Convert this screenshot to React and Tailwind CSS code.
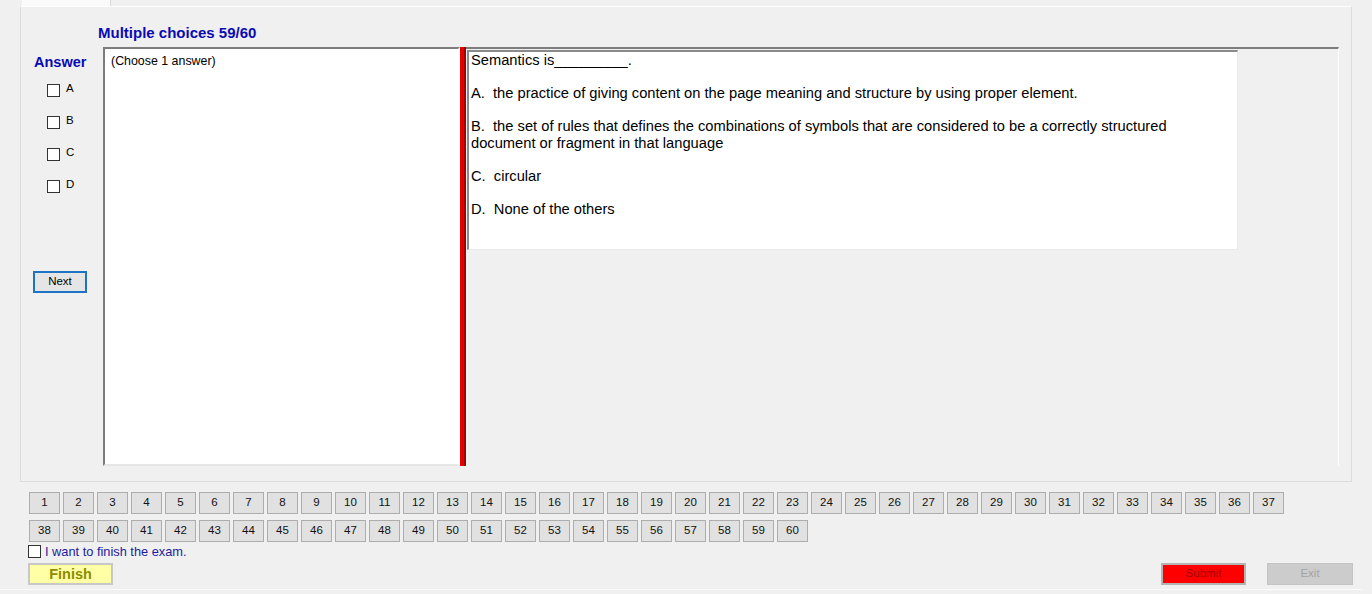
import React from 'react';

// Exam client window: question pane + answer column + question navigator.
const FONT = { fontFamily: '"Liberation Sans", Arial, sans-serif' };

const options = ['A', 'B', 'C', 'D'];
const row1 = Array.from({ length: 37 }, (_, i) => i + 1);
const row2 = Array.from({ length: 23 }, (_, i) => i + 38);

function Box({ className = '' }) {
  return <span className={`inline-block shrink-0 w-[13px] h-[13px] border border-[#333] bg-white ${className}`} />;
}

function NumButton({ n }) {
  return (
    <button className="w-[31px] h-[22px] border border-[#adadad] bg-[#e1e1e1] text-[11.5px] text-[#111] leading-none">
      {n}
    </button>
  );
}

export default function App() {
  return (
    <div style={FONT} className="w-[1372px] h-[594px] bg-[#f0f0f0] overflow-hidden flex flex-col text-black">
      {/* tab strip */}
      <div className="h-[6px] flex">
        <div className="ml-[22px] w-[89px] h-[6px] bg-[#fafafa] border-r border-[#d9d9d9]" />
      </div>

      {/* tab page */}
      <div className="ml-[20px] w-[1332px] h-[476px] border border-[#dcdcdc] border-t-[#fdfdfd] flex flex-col">
        <div className="h-[40px] pt-[17px] pl-[77px] text-[15px] font-bold text-[#0a0ab4] leading-[17px]">
          Multiple choices 59/60
        </div>

        <div className="flex h-[419px]">
          {/* answer column */}
          <div className="w-[82px] flex flex-col">
            <div className="mt-[7px] ml-[13px] text-[14.5px] font-bold text-[#0a0ab4] leading-[17px]">Answer</div>
            <div className="mt-[13px] ml-[26px] flex flex-col gap-[19px]">
              {options.map((o) => (
                <label key={o} className="flex items-center gap-[6px] h-[13px] text-[11.5px] leading-none">
                  <Box />
                  <span className="-mt-[4px]">{o}</span>
                </label>
              ))}
            </div>
            <button className="mt-[78px] ml-[12px] w-[54px] h-[22px] border-2 border-[#1f73c4] bg-[#e5e5e5] text-[11.5px] leading-none">
              Next
            </button>
          </div>

          {/* answer notes box */}
          <div className="w-[357px] bg-white border-2 border-t-[#7c7c7c] border-l-[#7c7c7c] border-r-white border-b-[#e6e6e6] pl-[6px] pt-[5px] text-[12.4px] leading-[14px]">
            (Choose 1 answer)
          </div>

          {/* splitter */}
          <div className="w-[6px] bg-[#e30000] border-r-2 border-[#a10000]" />

          {/* question panel */}
          <div className="w-[873px] border-t-2 border-[#7c7c7c] border-r border-r-[#fcfcfc] pt-[1px] pl-[1px]">
            <div className="w-[771px] h-[200px] bg-white border-l-2 border-t-2 border-[#8a8a8a] border-r border-r-[#e8e8e8] border-b border-b-[#e8e8e8] pl-[2px] text-[14.7px] leading-[17px]">
              <p className="mb-[16px]">Semantics is_________.</p>
              <p className="mb-[16px]">A.&nbsp; the practice of giving content on the page meaning and structure by using proper element.</p>
              <p className="mb-[16px]">
                B.&nbsp; the set of rules that defines the combinations of symbols that are considered to be a correctly structured
                <br />
                document or fragment in that language
              </p>
              <p className="mb-[16px]">C.&nbsp; circular</p>
              <p>D.&nbsp; None of the others</p>
            </div>
          </div>
        </div>
      </div>

      {/* navigator */}
      <div className="pl-[29px] mt-[10px] flex gap-[3px]">
        {row1.map((n) => <NumButton key={n} n={n} />)}
      </div>
      <div className="pl-[29px] mt-[6px] flex gap-[3px]">
        {row2.map((n) => <NumButton key={n} n={n} />)}
      </div>

      <label className="ml-[28px] mt-[2px] flex items-center gap-[4px] h-[14px] text-[12.8px] text-[#1c1ca0] leading-none">
        <Box />
        <span className="mt-[3px]">I want to finish the exam.</span>
      </label>

      <div className="mt-[5px] flex items-start">
        <button className="ml-[28px] w-[85px] h-[22px] border-2 border-[#c8c8c8] bg-[#ffffa6] text-[14.5px] font-bold text-[#8c8c00] leading-none">
          Finish
        </button>
        <button className="ml-[1048px] w-[85px] h-[22px] border-2 border-[#b4b4b4] bg-[#ff0000] text-[11.5px] text-[#a00000] leading-none">
          Submit
        </button>
        <button className="ml-[21px] w-[86px] h-[22px] border border-[#c4c4c4] bg-[#cccccc] text-[11.5px] text-[#a3a3a3] leading-none">
          Exit
        </button>
      </div>
      <div className="mt-[4px] h-px bg-[#fafafa] w-[1362px]" />
    </div>
  );
}
